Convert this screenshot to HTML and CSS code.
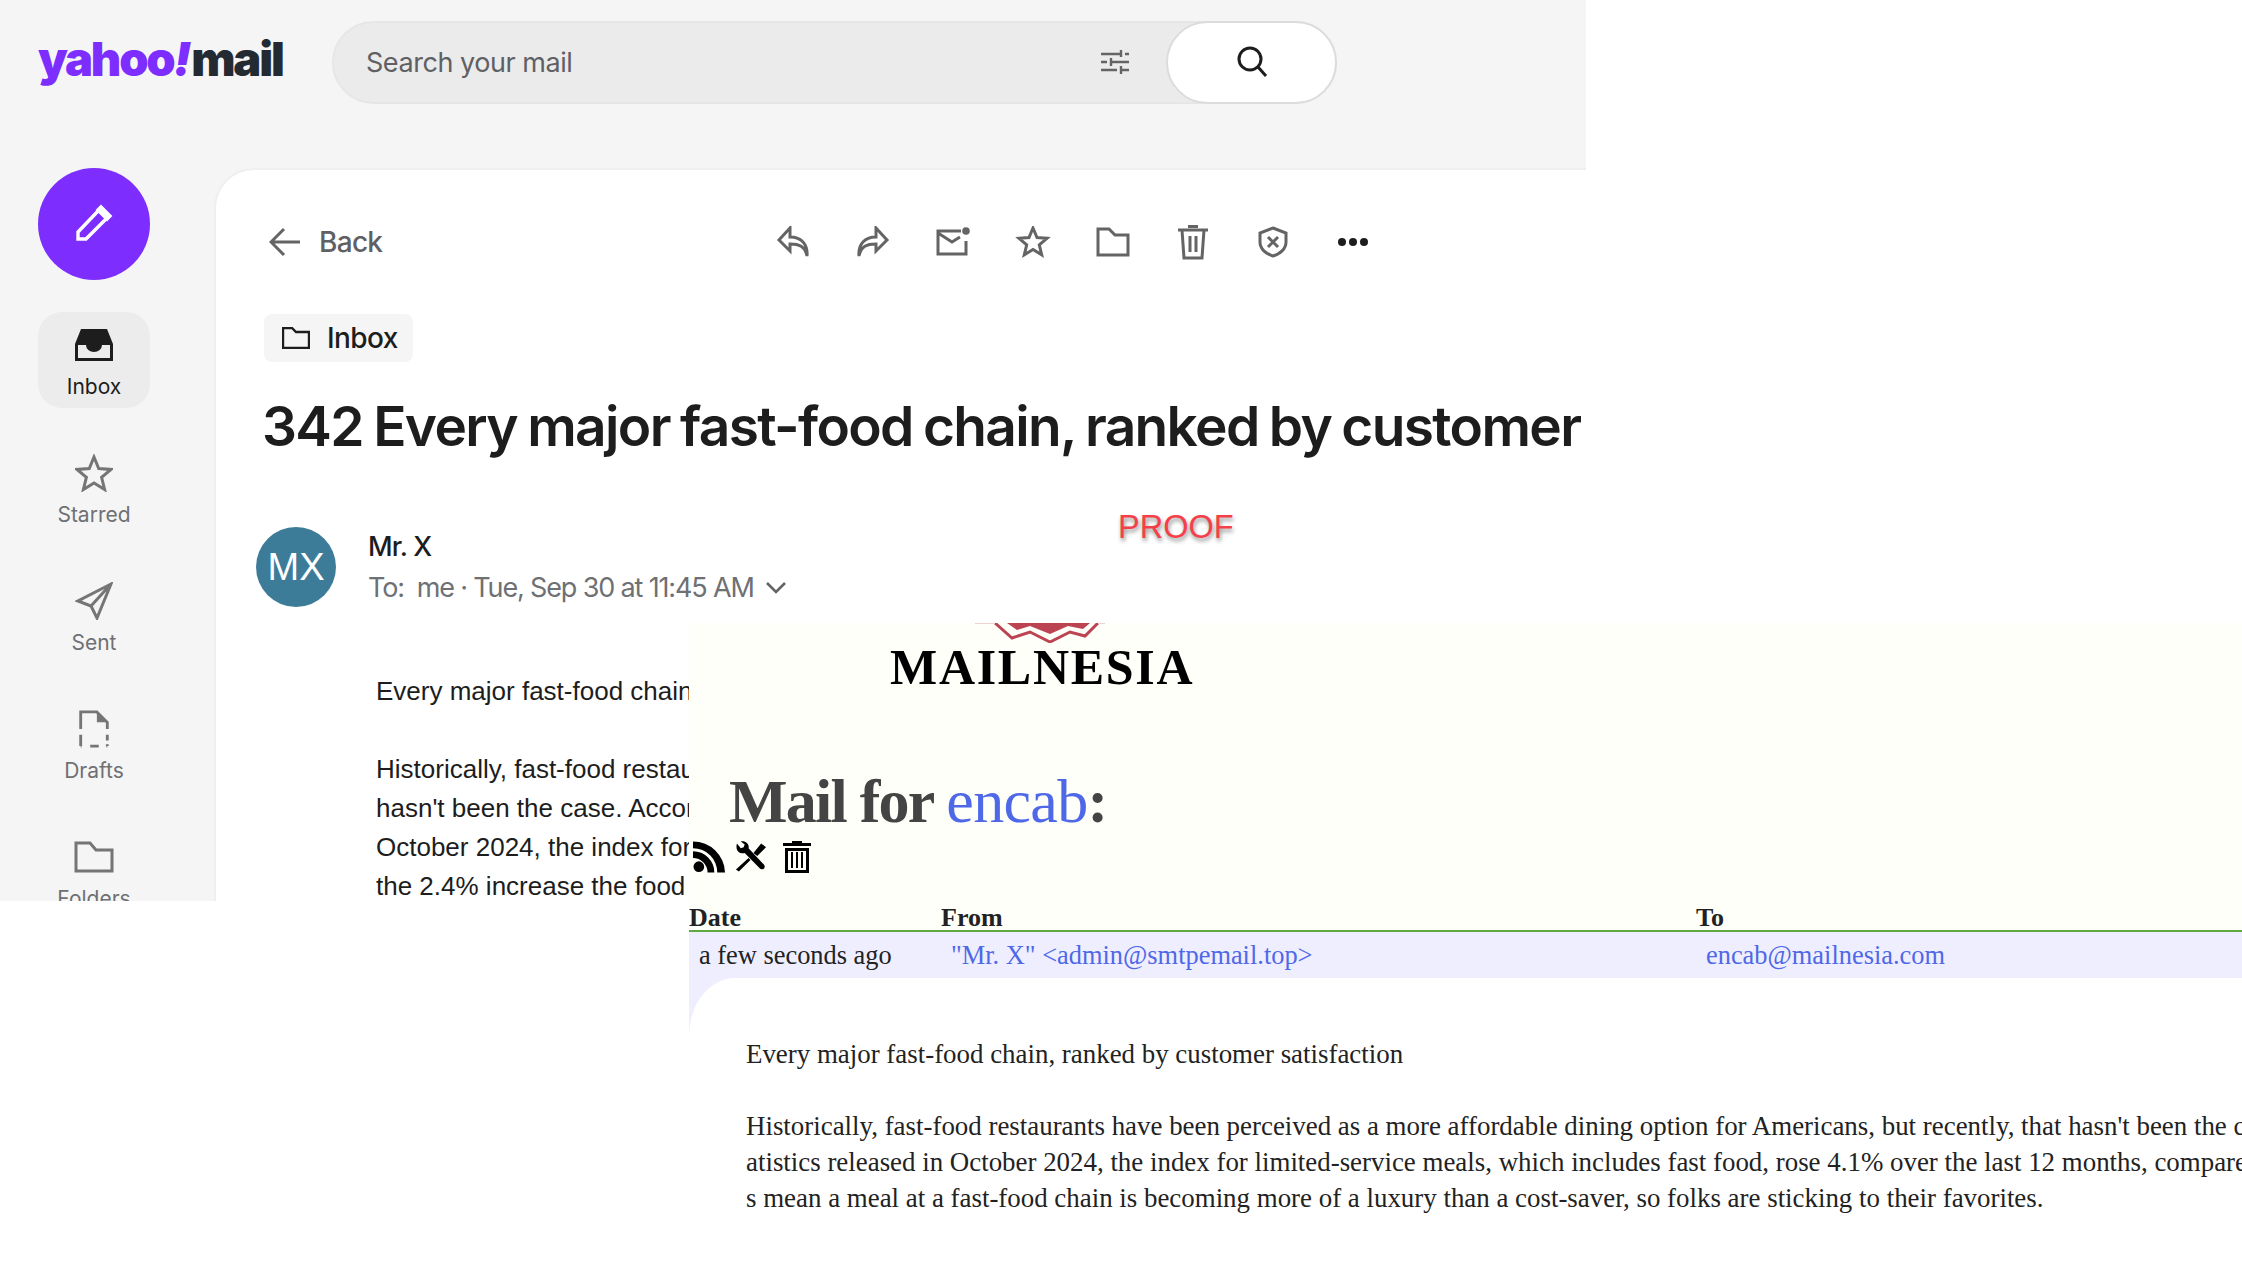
FILE: index.html
```html
<!DOCTYPE html>
<html lang="en">
<head>
    <meta charset="UTF-8" />
    <title>Proof</title>
    <link rel="stylesheet" href="styles.css">
</head>
<body>

<!-- yahoo window -->
<div class="yahoo">
    <div class="top-bar">
        <div class="logo"><span class="logo-yahoo">yahoo<i>!</i></span><span class="logo-mail">mail</span></div>
        <div class="search">
            <span class="search-text">Search your mail</span>
            <svg class="filter-icon" width="30" height="30" viewBox="0 0 30 30" fill="none" stroke="#646464" stroke-width="2.4">
                <path d="M1 7h20M25 7h4M21 3v7M1 15h6M11 15h18M11 11v8M1 23h16M21 23h8M21 19v8"/>
            </svg>
            <div class="search-btn">
                <svg width="34" height="34" viewBox="0 0 34 34" fill="none" stroke="#1d1d1d" stroke-width="3">
                    <circle cx="15" cy="14" r="11"/><path d="M23 22l8 9"/>
                </svg>
            </div>
        </div>
    </div>

    <div class="main">
        <div class="sidebar">
            <div class="compose">
                <svg width="40" height="40" viewBox="0 0 40 40" fill="none" stroke="#fff" stroke-width="3.4">
                    <path d="M4 35v-7L25 6l8 8-21 21z"/><path d="M27 3l9 9-3 3-9-9z" fill="#fff"/>
                </svg>
            </div>
            <div class="nav-item active">
                <svg width="38" height="32" viewBox="0 0 38 32"><path fill="#1d1d1d" d="M6 0h26l6 15v17H0V15z"/><path fill="#ececec" d="M3 16h8a8 7 0 0 0 16 0h8v13H3z"/></svg>
                <span>Inbox</span>
            </div>
            <div class="nav-item">
                <svg width="38" height="38" viewBox="0 0 38 38" fill="none" stroke="#757575" stroke-width="3"><path d="M19 3l4.700 11.500 12.300.9-9.400 8 3 12.100L19 28.900 8.400 35.500l3-12.100-9.400-8 12.300-.9z"/></svg>
                <span>Starred</span>
            </div>
            <div class="nav-item">
                <svg width="38" height="38" viewBox="0 0 38 38" fill="none" stroke="#757575" stroke-width="3"><path d="M36 2L3 19l13 5 6 12zM16 24L36 2"/></svg>
                <span>Sent</span>
            </div>
            <div class="nav-item">
                <svg width="32" height="40" viewBox="0 0 32 40" fill="none" stroke="#757575" stroke-width="3"><path d="M2 20V2h17l11 11v7M2 26v12M2 38h1M12 38h9M29 38h1M30 38v-2M30 32v-6"/><path d="M19 2l11 11H19z" fill="#757575" stroke="none"/></svg>
                <span>Drafts</span>
            </div>
            <div class="nav-item">
                <svg width="40" height="32" viewBox="0 0 40 32" fill="none" stroke="#757575" stroke-width="3"><path d="M2 30V2h14l6 7h16v21z"/></svg>
                <span>Folders</span>
            </div>
        </div>

        <div class="panel">
            <div class="toolbar">
                <div class="back">
                    <svg width="32" height="30" viewBox="0 0 32 30" fill="none" stroke="#646464" stroke-width="3"><path d="M31 15H3M15 2L2 15l13 13"/></svg>
                    <span>Back</span>
                </div>
                <div class="actions">
                    <svg width="32" height="32" viewBox="0 0 32 32" fill="none" stroke="#646464" stroke-width="3"><path d="M13 2L2 14l11 11v-7c9 0 15 2 17 12 1-11-5-19-17-19z"/></svg>
                    <svg width="32" height="32" viewBox="0 0 32 32" fill="none" stroke="#646464" stroke-width="3"><path d="M19 2l11 12-11 11v-7c-9 0-15 2-17 12-1-11 5-19 17-19z"/></svg>
                    <svg width="34" height="32" viewBox="0 0 34 32" fill="none" stroke="#646464" stroke-width="3"><path d="M25 5H2v23h28V15M2 7l14 9 8-5"/><circle cx="30" cy="5" r="3.800" fill="#646464" stroke="none"/></svg>
                    <svg width="32" height="32" viewBox="0 0 32 32" fill="none" stroke="#646464" stroke-width="3"><path d="M16 2l4 9.500 10 .8-7.700 6.500 2.400 10L16 23.500 7.300 28.800l2.400-10L2 12.300l10-.8z"/></svg>
                    <svg width="34" height="30" viewBox="0 0 34 30" fill="none" stroke="#646464" stroke-width="3"><path d="M2 28V2h11l6 6h13v20z"/></svg>
                    <svg width="32" height="36" viewBox="0 0 32 36" fill="none" stroke="#646464" stroke-width="3"><path d="M1 6h30M5 6l2 28h18l2-28M13 12v16M19 12v16"/><path d="M11 4V1h10v3z" fill="#646464" stroke="none"/></svg>
                    <svg width="32" height="32" viewBox="0 0 32 32" fill="none" stroke="#646464" stroke-width="3"><path d="M16 2l13 5v9c0 7-6 12-13 14C9 28 3 23 3 16V7zM11 11l10 10M21 11L11 21"/></svg>
                    <svg width="32" height="32" viewBox="0 0 32 32" fill="#1d1d1d"><circle cx="5" cy="16" r="4"/><circle cx="16" cy="16" r="4"/><circle cx="27" cy="16" r="4"/></svg>
                </div>
            </div>

            <div class="folder-chip">
                <svg width="28" height="22" viewBox="0 0 28 22" fill="none" stroke="#1d1d1d" stroke-width="2.400"><path d="M1 21V1h9l4 4h13v16z"/></svg>
                <span>Inbox</span>
            </div>

            <h1 class="subject">342 Every major fast-food chain, ranked by customer</h1>

            <div class="sender">
                <div class="avatar">MX</div>
                <div class="sender-info">
                    <div class="sender-name">Mr. X</div>
                    <div class="sender-meta">
                        <span>To:&nbsp; me · Tue, Sep 30 at 11:45 AM</span>
                        <svg width="20" height="12" viewBox="0 0 20 12" fill="none" stroke="#646464" stroke-width="2.600"><path d="M1 1l9 9 9-9"/></svg>
                    </div>
                </div>
            </div>

            <div class="mail-body">
                <p>Every major fast-food chain, ranked by customer satisfaction</p>
                <p>Historically, fast-food restaurants have been perceived as a more affordable dining option for Americans, but recently, that<br>
                hasn't been the case. According to the Bureau of Labor Statistics released in<br>
                October 2024, the index for limited-service meals, which includes fast food, rose 4.1% over the last 12 months, compared to<br>
                the 2.4% increase the food at home index saw.</p>
            </div>
        </div>
    </div>
</div>

<div class="proof">PROOF</div>

<!-- mailnesia window -->
<div class="mailnesia">
    <div class="brand">
        <svg class="seal" width="130" height="20" viewBox="0 0 130 20">
            <path fill="#bc4352" d="M32 0l10 7 13-4 20 8 18-8 15 3 7-6z"/>
            <path fill="none" stroke="#bc4352" stroke-width="3" d="M20 0l17 15 18-6 20 10 20-10 15 4 13-13"/>
            <path fill="none" stroke="#ecd2d2" stroke-width="1" d="M0 .5h20M123 .5h7"/>
        </svg>
        <div class="brand-name">MAILNESIA</div>
    </div>

    <h2 class="mail-for">Mail for <a href="#">encab</a>:</h2>

    <div class="tools">
        <svg width="33" height="32" viewBox="0 0 34 32"><circle cx="6" cy="26" r="5.500"/><path d="M0 10v7a15 15 0 0 1 15 15h7A22 22 0 0 0 0 10z"/><path d="M0 0v7a25 25 0 0 1 25 25h8A33 33 0 0 0 0 0z"/></svg>
        <svg width="33" height="32" viewBox="0 0 34 32"><path d="M3 2l4 5 3-1 1-3-4-3c5-1 9 3 8 7l16 17c2 3-1 6-4 4L11 12c-5 1-10-2-8-10z"/><path d="M20 12l8-10 5 4-9 9zM15 17l2 2L5 31l-3-2z"/></svg>
        <svg class="tools-trash" width="28" height="32" viewBox="0 0 28 32"><path d="M9 2V0h10v2h9v3H0V2z"/><path d="M2 7h24v25H2zm3 3v19h18V10z" fill-rule="evenodd"/><path d="M8 11h2v16H8zM13 11h2v16h-2zM18 11h2v16h-2z"/></svg>
    </div>

    <div class="mail-table">
        <div class="table-head">
            <span class="col-date">Date</span>
            <span class="col-from">From</span>
            <span>To</span>
        </div>
        <div class="table-row">
            <span class="col-date">a few seconds ago</span>
            <a class="col-from" href="#">"Mr. X" &lt;admin@smtpemail.top&gt;</a>
            <a href="#">encab@mailnesia.com</a>
        </div>
    </div>

    <div class="message-wrap">
        <div class="message">
            <p>Every major fast-food chain, ranked by customer satisfaction</p>
            <p>Historically, fast-food restaurants have been perceived as a more affordable dining option for Americans, but recently, that hasn't been the case.<br>
            atistics released in October 2024, the index for limited-service meals, which includes fast food, rose 4.1% over the last 12 months, compared to the 2.4%<br>
            s mean a meal at a fast-food chain is becoming more of a luxury than a cost-saver, so folks are sticking to their favorites.</p>
        </div>
    </div>
</div>

</body>
</html>
```

FILE: styles.css
```css
html, body {
    margin: 0;
    height: 100%;
}

body {
    width: 2242px;
    height: 1275px;
    position: relative;
    overflow: hidden;
    background: white;
    font-family: Inter, "Liberation Sans", sans-serif;
}

/* yahoo window */
.yahoo {
    position: absolute;
    top: 0;
    left: 0;
    width: 1586px;
    height: 901px;
    overflow: hidden;
    background: #f5f5f5;
}

.top-bar {
    display: flex;
    align-items: center;
    height: 124px;
    padding-left: 38px;
}

.logo {
    width: 294px;
    font-family: Inter, sans-serif;
    font-size: 47px;
    font-weight: 900;
    letter-spacing: -2.2px;
    line-height: 1;
    margin-top: -7px;
}

.logo-yahoo {
    color: #7d2eff;
}

.logo-yahoo i {
    margin-right: 2px;
}

.logo-mail {
    color: #232a31;
}

.search {
    display: flex;
    align-items: center;
    width: 1005px;
    height: 83px;
    box-sizing: border-box;
    border: 2px solid #e6e6e6;
    border-radius: 42px;
    background: #ebebeb;
    padding-left: 32px;
}

.search-text {
    flex: 1;
    font-size: 27px;
    letter-spacing: -0.45px;
    color: #5f6064;
}

.filter-icon {
    margin-right: 36px;
}

.search-btn {
    display: flex;
    align-items: center;
    justify-content: center;
    width: 171px;
    height: 83px;
    box-sizing: border-box;
    margin-right: -2px;
    border: 2px solid #dcdcdc;
    border-radius: 42px;
    background: white;
}

.main {
    display: flex;
    height: 777px;
}

.sidebar {
    display: flex;
    flex-direction: column;
    align-items: center;
    width: 112px;
    padding: 44px 64px 0 38px;
    flex-shrink: 0;
}

.compose {
    display: flex;
    align-items: center;
    justify-content: center;
    width: 112px;
    height: 112px;
    flex-shrink: 0;
    border-radius: 50%;
    background: #7d2eff;
    margin-bottom: 32px;
}

.nav-item {
    display: flex;
    flex-direction: column;
    align-items: center;
    gap: 10px;
    width: 112px;
    height: 96px;
    box-sizing: border-box;
    padding-top: 14px;
    margin-bottom: 32px;
    flex-shrink: 0;
    border-radius: 24px;
    font-size: 21px;
    color: #6e7074;
}

.nav-item svg {
    height: 38px;
}

.nav-item.active {
    background: #ececec;
    color: #1d1d1d;
}

.panel {
    flex: 1;
    margin-top: 44px;
    background: white;
    border-top: 2px solid #efefef;
    border-left: 2px solid #efefef;
    border-top-left-radius: 40px;
    padding: 0 0 0 48px;
    min-width: 0;
}

.toolbar {
    display: flex;
    align-items: center;
    height: 100px;
    margin-top: 22px;
}

.back {
    display: flex;
    align-items: center;
    gap: 18px;
    width: 484px;
    margin-left: 5px;
    font-size: 28px;
    font-weight: 500;
    letter-spacing: -0.7px;
    color: #5f6064;
}

.actions {
    display: flex;
    align-items: center;
}

.actions svg {
    width: 80px;
    flex-shrink: 0;
}

.folder-chip {
    display: inline-flex;
    align-items: center;
    gap: 17px;
    height: 48px;
    padding: 0 15px 0 18px;
    margin-top: 22px;
    border-radius: 8px;
    background: #f5f5f5;
    font-size: 28px;
    font-weight: 500;
    letter-spacing: -0.6px;
    color: #1d1d1d;
}

.subject {
    margin: 29px 0 0 -2px;
    font-size: 55px;
    font-weight: 600;
    line-height: 70px;
    letter-spacing: -1.65px;
    word-spacing: -2px;
    color: #1d1d1d;
    white-space: nowrap;
}

.sender {
    display: flex;
    gap: 32px;
    margin: 66px 0 0 -8px;
}

.avatar {
    display: flex;
    align-items: center;
    justify-content: center;
    width: 80px;
    height: 80px;
    border-radius: 50%;
    background: #3d7c99;
    color: white;
    font-size: 38px;
    font-family: "Liberation Sans", sans-serif;
}

.sender-name {
    font-size: 27px;
    font-weight: 500;
    letter-spacing: -0.8px;
    color: #1d1d1d;
    line-height: 40px;
    margin-top: 0;
}

.sender-meta {
    display: flex;
    align-items: center;
    gap: 12px;
    font-size: 27px;
    letter-spacing: -1.15px;
    color: #6e7074;
    line-height: 42px;
}

.mail-body {
    margin: 63px 0 0 112px;
    font-family: "Liberation Sans", sans-serif;
    font-size: 26px;
    line-height: 39px;
    color: #1d1d1d;
    white-space: nowrap;
}

.mail-body p {
    margin: 0 0 39px;
}

.proof {
    position: absolute;
    top: 507px;
    left: 1118px;
    font-family: "Liberation Sans", sans-serif;
    font-size: 32.5px;
    line-height: 40px;
    color: #f5404a;
    text-shadow: 1px 3px 4px rgba(0, 0, 0, 0.45);
}

/* mailnesia window */
.mailnesia {
    position: absolute;
    top: 623px;
    left: 689px;
    right: 0;
    bottom: 0;
    overflow: hidden;
    background: #fefff9;
    font-family: "Liberation Serif", serif;
}

.brand {
    display: flex;
    flex-direction: column;
    align-items: flex-start;
    height: 60px;
}

.seal {
    margin-left: 286px;
    flex-shrink: 0;
}

.brand-name {
    margin: 1px 0 0 201px;
    font-size: 50px;
    line-height: 46px;
    font-weight: bold;
    letter-spacing: 1.7px;
    color: black;
}

.mail-for {
    margin: 82px 0 0 40px;
    font-size: 62px;
    line-height: 72px;
    font-weight: bold;
    letter-spacing: -1.75px;
    color: #444;
}

.mail-for a {
    color: #4f68e8;
    font-weight: normal;
    letter-spacing: -0.65px;
    text-decoration: none;
}

.tools {
    display: flex;
    align-items: center;
    gap: 8px;
    height: 32px;
    margin: 4px 0 0 4px;
}

.tools-trash {
    margin-left: 8px;
}

.mail-table {
    margin-top: 25px;
}

.table-head {
    display: flex;
    height: 32px;
    align-items: flex-end;
    font-size: 26px;
    line-height: 25px;
    font-weight: bold;
    color: #222;
    border-bottom: 2px solid #5ea93d;
}

.table-head .col-date {
    width: 252px;
}

.table-head .col-from {
    width: 755px;
}

.table-row {
    display: flex;
    align-items: center;
    height: 46px;
    padding-left: 10px;
    font-size: 26.4px;
    color: #222;
    background: #eeeeff;
    white-space: nowrap;
}

.table-row a {
    color: #4f68e8;
    text-decoration: none;
}

.table-row .col-date {
    width: 252px;
}

.table-row .col-from {
    width: 755px;
}

.message-wrap {
    background: #eeeeff;
    height: 300px;
}

.message {
    height: 100%;
    box-sizing: border-box;
    background: white;
    border-top-left-radius: 46px 58px;
    padding: 58px 0 0 57px;
    font-size: 26.9px;
    line-height: 36px;
    color: #222;
    white-space: nowrap;
}

.message p {
    margin: 0 0 36px;
}
```
